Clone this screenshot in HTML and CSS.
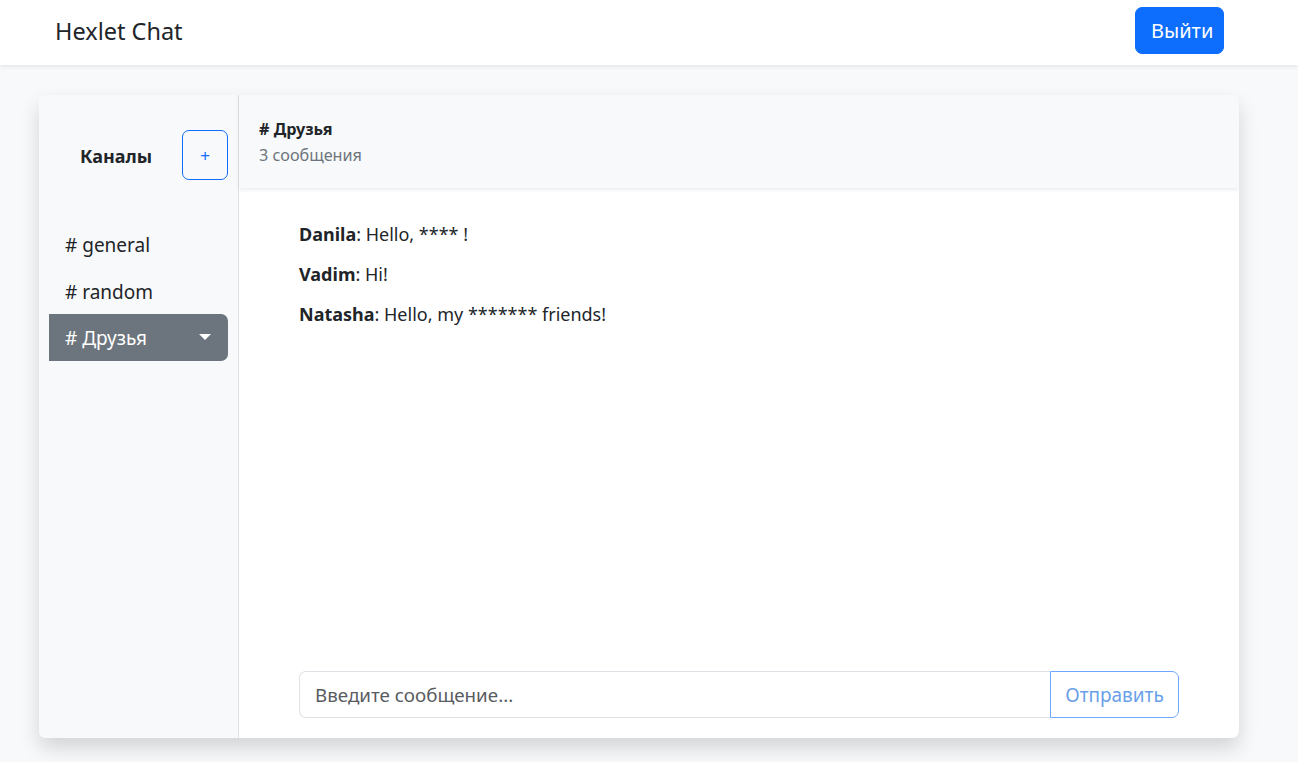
FILE: index.html
```html
<!DOCTYPE html>
<html lang="ru">
<head>
<meta charset="utf-8">
<title>Hexlet Chat</title>
<link rel="stylesheet" href="styles.css">
</head>
<body>
<div class="app">
  <nav class="navbar">
    <div class="nav-inner">
      <a class="brand" href="#">Hexlet Chat</a>
      <button class="btn-primary" type="button">Выйти</button>
    </div>
  </nav>
  <div class="chat-card">
    <aside class="sidebar">
      <div class="channels-head">
        <b class="channels-title">Каналы</b>
        <button class="add-btn" type="button">+</button>
      </div>
      <ul class="channels">
        <li><button class="channel" type="button"># general</button></li>
        <li><button class="channel" type="button"># random</button></li>
        <li class="active-group">
          <button class="channel active" type="button"># Друзья</button>
          <button class="toggle" type="button"><span class="caret"></span></button>
        </li>
      </ul>
    </aside>
    <main class="main">
      <div class="chat-head">
        <p class="chat-name"><b># Друзья</b></p>
        <span class="chat-count">3 сообщения</span>
      </div>
      <div class="messages">
        <div class="msg"><b>Danila</b>: Hello, **** !</div>
        <div class="msg"><b>Vadim</b>: Hi!</div>
        <div class="msg"><b>Natasha</b>: Hello, my ******* friends!</div>
      </div>
      <div class="composer">
        <form class="input-group">
          <input class="msg-input" type="text" placeholder="Введите сообщение...">
          <button class="send-btn" type="submit" disabled>Отправить</button>
        </form>
      </div>
    </main>
  </div>
</div>
</body>
</html>
```

FILE: styles.css
```css
* { box-sizing: border-box; }
html, body { margin: 0; height: 100%; }
body {
  font-family: "Noto Sans", "Open Sans", sans-serif;
  font-size: 20px;
  line-height: 30px;
  color: #212529;
  background: #f8f9fa;
}
.app {
  display: flex;
  flex-direction: column;
  height: 762px;
}
.navbar {
  height: 65px;
  background: #fff;
  box-shadow: 0 2px 4px rgba(0,0,0,0.075);
  flex: 0 0 auto;
  position: relative;
  z-index: 1;
}
.nav-inner {
  width: 1200px;
  margin-left: 39px;
  padding: 0 15px;
  height: 100%;
  display: flex;
  align-items: center;
  justify-content: space-between;
}
.brand {
  font-size: 23.5px;
  color: #212529;
  text-decoration: none;
  margin-left: 1px;
  margin-top: -4px;
}
.btn-primary {
  font-family: inherit;
  font-size: 20px;
  line-height: 30px;
  color: #fff;
  background: #0d6efd;
  border: 1px solid #0d6efd;
  border-radius: 7px;
  padding: 7px 15px;
  width: 89px;
  height: 47px;
  margin-top: -4px;
}
.chat-card {
  width: 1200px;
  margin: 30px 0 24px 39px;
  height: 643px;
  display: flex;
  background: #fff;
  border-radius: 7px;
  overflow: hidden;
  box-shadow: 0 10px 20px rgba(0,0,0,0.15);
}
.sidebar {
  width: 200px;
  flex: 0 0 200px;
  background: #f8f9fa;
  border-right: 1px solid #dee2e6;
  display: flex;
  flex-direction: column;
}
.channels-head {
  display: flex;
  justify-content: space-between;
  align-items: center;
  padding: 35px 10px 0 41px;
  height: 85px;
  margin-bottom: 41px;
}
.channels-title {
  font-weight: 700;
  font-size: 18px;
  margin-top: 1px;
}
.add-btn {
  width: 46px;
  height: 50px;
  background: transparent;
  border: 1px solid #0d6efd;
  border-radius: 7px;
  color: #0d6efd;
  font-family: inherit;
  font-size: 17px;
  line-height: 1;
  padding: 0 0 0;
  margin-top: 0;
}
.channels {
  list-style: none;
  margin: 0;
  padding: 0 10px;
}
.channels li {
  display: flex;
  height: 47px;
}
.channel {
  flex: 1 1 auto;
  text-align: left;
  background: transparent;
  border: 0;
  padding: 0 16px;
  font-family: inherit;
  font-size: 19px;
  line-height: 30px;
  color: #212529;
}
.channel.active {
  background: #6c757d;
  color: #fff;
}
.active-group {
  border-radius: 0 7px 7px 0;
  overflow: hidden;
  margin-top: -1px;
}
.toggle {
  width: 45px;
  flex: 0 0 45px;
  background: #6c757d;
  border: 0;
  padding: 0;
  display: flex;
  align-items: center;
  justify-content: center;
}
.caret {
  display: block;
  width: 0;
  height: 0;
  border-top: 6px solid #fff;
  border-left: 6px solid transparent;
  border-right: 6px solid transparent;
  margin-top: -1px;
  margin-left: -2px;
}
.main {
  flex: 1 1 auto;
  display: flex;
  flex-direction: column;
  min-width: 0;
}
.chat-head {
  background: #f8f9fa;
  padding: 21px 20px 19px;
  height: 93px;
  font-size: 16.2px;
  line-height: 26px;
  box-shadow: 0 2px 4px rgba(0,0,0,0.075);
  margin-bottom: 31px;
  position: relative;
}
.chat-name { margin: 0; }
.chat-count { color: #6c757d; }
.messages {
  padding: 0 60px;
  flex: 1 1 auto;
  font-size: 18px;
}
.msg {
  margin-bottom: 10px;
}
.composer {
  padding: 20px 60px;
}
.input-group {
  display: flex;
  margin: 0;
  height: 47px;
}
.msg-input {
  flex: 1 1 auto;
  border: 1px solid #dee2e6;
  border-right: 0;
  border-radius: 7px 0 0 7px;
  padding: 0 15px;
  font-family: inherit;
  font-size: 18.8px;
  color: #212529;
  background: #fff;
  outline: none;
}
.msg-input::placeholder { color: #595c5f; }
.send-btn {
  width: 129px;
  flex: 0 0 129px;
  border: 1px solid #6ea8fe;
  border-radius: 0 7px 7px 0;
  background: #fff;
  color: #6a9fe8;
  font-family: inherit;
  font-size: 19px;
  padding: 0;
}
```
